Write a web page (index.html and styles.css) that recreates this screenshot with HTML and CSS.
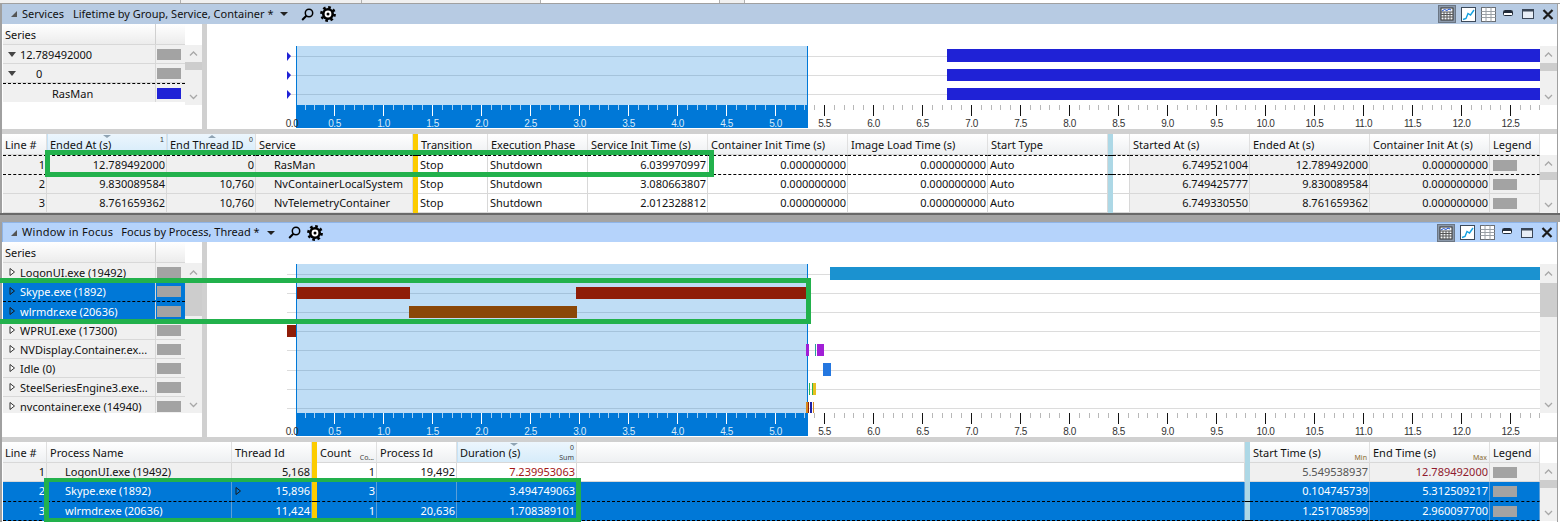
FILE: index.html
```html
<!DOCTYPE html>
<html lang="en">
<head>
<meta charset="utf-8">
<title>Windows Performance Analyzer</title>
<link rel="stylesheet" href="styles.css">
</head>
<body>
<svg class="defs" aria-hidden="true">
  <symbol id="tri-open" viewBox="0 0 10 10"><path d="M1 3h8L5 8z" fill="#444"/></symbol>
  <symbol id="tri-closed" viewBox="0 0 10 10"><path d="M3 1.5v7L7.5 5z" fill="#fff" stroke="#333"/></symbol>
  <symbol id="tri-closed-sel" viewBox="0 0 10 10"><path d="M3 1.5v7L7.5 5z" fill="#0078d7" stroke="#1a1a1a"/></symbol>
  <symbol id="collapse" viewBox="0 0 8 8"><path d="M1 7h6V1z" fill="#555"/></symbol>
  <symbol id="drop" viewBox="0 0 8 6"><path d="M0 1h8L4 5z" fill="#222"/></symbol>
  <symbol id="search" viewBox="0 0 13 13"><circle cx="8" cy="5" r="3.7" fill="none" stroke="#000" stroke-width="1.5"/><path d="M5.4 7.7 1.2 12" stroke="#000" stroke-width="2"/></symbol>
  <symbol id="gear" viewBox="0 0 16 16"><circle cx="8" cy="8" r="6" fill="#000"/><circle cx="8" cy="8" r="6.6" fill="none" stroke="#000" stroke-width="2.6" stroke-dasharray="2.6 2.58"/><circle cx="8" cy="8" r="3.4" fill="#fff"/><circle cx="8" cy="8" r="1.5" fill="#000"/></symbol>
  <symbol id="ic-both" viewBox="0 0 18 18"><rect x=".5" y=".5" width="17" height="17" fill="#8b99ab" stroke="#6b7684"/><rect x="3" y="3" width="12" height="12" fill="#f4f6f8" stroke="#333"/><path d="M3 7h12M3 9.5h12M3 12h12M6 7v8M9 7v8M12 7v8" stroke="#555"/><path d="M4 6l2.500-1.500 2.500 1 2-1.500 2 1" fill="none" stroke="#1a4fd0"/></symbol>
  <symbol id="ic-graph" viewBox="0 0 15 15"><rect x=".5" y=".5" width="14" height="14" fill="#fff" stroke="#3d4a5a"/><path d="M2 12.500l3-1 2-5 2.500 1.500L13 3" fill="none" stroke="#12a0e0" stroke-width="1.400"/></symbol>
  <symbol id="ic-table" viewBox="0 0 15 15"><rect x=".5" y=".5" width="14" height="14" fill="#fff" stroke="#6a6f75"/><path d="M.5 4.500h14M.5 7.500h14M.5 10.500h14M5 .5v14M10 .5v14" stroke="#9aa0a6"/></symbol>
  <symbol id="ic-min" viewBox="0 0 10 6"><rect x=".5" y=".5" width="9" height="5" rx="1" fill="#fff" stroke="#222c3a"/><rect x="1" y="1" width="8" height="2" fill="#222c3a"/></symbol>
  <symbol id="ic-max" viewBox="0 0 12 10"><rect x=".5" y=".5" width="11" height="9" fill="#e8eef6" stroke="#3a4656"/><rect x="1" y="1" width="10" height="1.500" fill="#3a4656"/></symbol>
  <symbol id="ic-close" viewBox="0 0 12 11"><path d="M1.500 1l9 9M10.500 1l-9 9" stroke="#1c1c1c" stroke-width="2.200"/></symbol>
  <symbol id="chev-up" viewBox="0 0 17 17"><path d="M5 10.500l3.500-3.500 3.500 3.500" fill="none" stroke="#a8a8a8" stroke-width="1.300"/></symbol>
  <symbol id="chev-down" viewBox="0 0 17 17"><path d="M5 7l3.500 3.500L12 7" fill="none" stroke="#a8a8a8" stroke-width="1.300"/></symbol>
</svg>

<div class="tabs">
  <div class="tab tab-a"></div><div class="tab tab-a"></div><div class="tab tab-b"></div>
  <div class="tab tab-on"></div><div class="tab tab-c"></div><div class="tab tab-rest"></div>
</div>

<section class="panel panel-top">
  <header class="title">
    <svg class="t-collapse"><use href="#collapse"/></svg>
    <span class="t-name">Services</span>
    <span class="t-preset p1">Lifetime by Group, Service, Container *</span>
    <svg class="t-drop"><use href="#drop"/></svg>
    <svg class="t-search"><use href="#search"/></svg>
    <svg class="t-gear"><use href="#gear"/></svg>
    <div class="t-tools">
      <svg class="i-both"><use href="#ic-both"/></svg>
      <svg class="i-graph"><use href="#ic-graph"/></svg>
      <svg class="i-table"><use href="#ic-table"/></svg>
      <svg class="i-min"><use href="#ic-min"/></svg>
      <svg class="i-max"><use href="#ic-max"/></svg>
      <svg class="i-close"><use href="#ic-close"/></svg>
    </div>
  </header>
  <div class="main main-top">
    <div class="series">
      <div class="series-list">
        <div class="s-head"><span class="s-name">Series</span><span class="s-leg"></span></div>
        <div class="s-row"><span class="s-name"><svg class="tri"><use href="#tri-open"/></svg>12.789492000</span><span class="s-leg"><i class="sw"></i></span></div>
        <div class="s-row"><span class="s-name lvl1"><svg class="tri"><use href="#tri-open"/></svg>0</span><span class="s-leg"><i class="sw"></i></span></div>
        <div class="s-row focus"><span class="s-name lvl2">RasMan</span><span class="s-leg"><i class="sw sw-blue"></i></span></div>
      </div>
      <div class="vscroll vs-short">
        <svg class="chev"><use href="#chev-up"/></svg><div class="thumb"></div><div class="fill"></div><svg class="chev"><use href="#chev-down"/></svg>
      </div>
    </div>
    <div class="vsplit"></div>
    <svg class="chart chart-top" viewBox="207 24 1333 105">
      <defs>
        <pattern id="tk-sel" patternUnits="userSpaceOnUse" x="285" y="105" width="49" height="23">
          <rect width="1" height="11" fill="#fff"/><rect x="10" width="1" height="5" fill="#a9d0f0"/><rect x="20" width="1" height="5" fill="#a9d0f0"/><rect x="29" width="1" height="5" fill="#a9d0f0"/><rect x="39" width="1" height="5" fill="#a9d0f0"/>
        </pattern>
        <pattern id="tk-off" patternUnits="userSpaceOnUse" x="285" y="105" width="49" height="23">
          <rect width="1" height="11" fill="#111"/><rect x="10" width="1" height="5" fill="#b8b8b8"/><rect x="20" width="1" height="5" fill="#b8b8b8"/><rect x="29" width="1" height="5" fill="#b8b8b8"/><rect x="39" width="1" height="5" fill="#b8b8b8"/>
        </pattern>
      </defs>
      <g class="grid"><rect x="287" y="56" width="1253" height="1"/><rect x="287" y="75" width="1253" height="1"/><rect x="287" y="94" width="1253" height="1"/></g>
      <rect class="sel" x="296" y="46" width="512" height="59"/>
      <rect class="sel-edge" x="296" y="46" width="1" height="59"/><rect class="sel-edge" x="807" y="46" width="1" height="59"/>
      <g class="blue"><rect x="947" y="49" width="593" height="13"/><rect x="947" y="69" width="593" height="12"/><rect x="947" y="88" width="593" height="12"/>
        <path d="M287 52l4 4-4 5zM287 71l4 4-4 5zM287 90l4 4-4 5z"/></g>
      <g id="ticks">
        <rect class="axis-sel" x="296" y="105" width="512" height="23"/>
        <rect x="296" y="105" width="512" height="23" fill="url(#tk-sel)"/>
        <rect x="808" y="105" width="732" height="23" fill="url(#tk-off)"/>
      </g>
      <g class="lab lab-on" transform="translate(0 127)"><text class="lab-zero" x="292">0.0</text><text x="334.5">0.5</text><text x="383.5">1.0</text><text x="432.5">1.5</text><text x="481.5">2.0</text><text x="530.5">2.5</text><text x="579.5">3.0</text><text x="628.500">3.5</text><text x="677.5">4.0</text><text x="726.5">4.5</text><text x="775.5">5.0</text></g>
      <g class="lab" transform="translate(0 127)"><text x="824.5">5.5</text><text x="873.5">6.0</text><text x="922.5">6.5</text><text x="971.5">7.0</text><text x="1020.5">7.5</text><text x="1069.5">8.0</text><text x="1118.5">8.5</text><text x="1167.5">9.0</text><text x="1216.5">9.5</text><text x="1265.5">10.0</text><text x="1314.5">10.5</text><text x="1363.5">11.0</text><text x="1412.5">11.5</text><text x="1461.5">12.0</text><text x="1510.5">12.5</text></g>
    </svg>
    <div class="vscroll vs-chart-top">
      <svg class="chev"><use href="#chev-up"/></svg><div class="thumb"></div><div class="fill"></div><svg class="chev"><use href="#chev-down"/></svg>
    </div>
  </div>
  <div class="hsplit"></div>
  <div class="table t1">
    <div class="rows">
      <div class="row head">
        <span class="c">Line #</span>
        <span class="c sorted">Ended At (s)<i class="sort-down sd1"></i><b class="sort-no">1</b></span>
        <span class="c sorted">End Thread ID<i class="sort-up su1"></i><b class="sort-no">0</b></span>
        <span class="c">Service</span>
        <span class="gold"></span>
        <span class="c">Transition</span><span class="c">Execution Phase</span><span class="c">Service Init Time (s)</span><span class="c">Container Init Time (s)</span><span class="c">Image Load Time (s)</span><span class="c">Start Type</span>
        <span class="aqua"></span><span class="c"></span>
        <span class="c">Started At (s)</span><span class="c">Ended At (s)</span><span class="c">Container Init At (s)</span><span class="c">Legend</span>
      </div>
      <div class="row focus">
        <span class="c g r">1</span><span class="c g r">12.789492000</span><span class="c g r">0</span><span class="c g in">RasMan</span><span class="gold"></span>
        <span class="c">Stop</span><span class="c">Shutdown</span><span class="c r">6.039970997</span><span class="c r">0.000000000</span><span class="c r">0.000000000</span><span class="c">Auto</span><span class="aqua"></span><span class="c"></span>
        <span class="c g r">6.749521004</span><span class="c g r">12.789492000</span><span class="c g r">0.000000000</span><span class="c g"><i class="sw sw-t"></i></span>
      </div>
      <div class="row">
        <span class="c g r">2</span><span class="c g r">9.830089584</span><span class="c g r">10,760</span><span class="c g in">NvContainerLocalSystem</span><span class="gold"></span>
        <span class="c">Stop</span><span class="c">Shutdown</span><span class="c r">3.080663807</span><span class="c r">0.000000000</span><span class="c r">0.000000000</span><span class="c">Auto</span><span class="aqua"></span><span class="c"></span>
        <span class="c g r">6.749425777</span><span class="c g r">9.830089584</span><span class="c g r">0.000000000</span><span class="c g"><i class="sw sw-t"></i></span>
      </div>
      <div class="row">
        <span class="c g r">3</span><span class="c g r">8.761659362</span><span class="c g r">10,760</span><span class="c g in">NvTelemetryContainer</span><span class="gold"></span>
        <span class="c">Stop</span><span class="c">Shutdown</span><span class="c r">2.012328812</span><span class="c r">0.000000000</span><span class="c r">0.000000000</span><span class="c">Auto</span><span class="aqua"></span><span class="c"></span>
        <span class="c g r">6.749330550</span><span class="c g r">8.761659362</span><span class="c g r">0.000000000</span><span class="c g"><i class="sw sw-t"></i></span>
      </div>
    </div>
    <div class="vscroll vs-table">
      <svg class="chev"><use href="#chev-up"/></svg><div class="thumb"></div><div class="fill"></div><svg class="chev"><use href="#chev-down"/></svg>
    </div>
  </div>
</section>

<div class="panel-gap"></div>

<section class="panel panel-bottom">
  <header class="title">
    <svg class="t-collapse"><use href="#collapse"/></svg>
    <span class="t-name">Window in Focus</span>
    <span class="t-preset p2">Focus by Process, Thread *</span>
    <svg class="t-drop"><use href="#drop"/></svg>
    <svg class="t-search"><use href="#search"/></svg>
    <svg class="t-gear"><use href="#gear"/></svg>
    <div class="t-tools">
      <svg class="i-both"><use href="#ic-both"/></svg>
      <svg class="i-graph"><use href="#ic-graph"/></svg>
      <svg class="i-table"><use href="#ic-table"/></svg>
      <svg class="i-min"><use href="#ic-min"/></svg>
      <svg class="i-max"><use href="#ic-max"/></svg>
      <svg class="i-close"><use href="#ic-close"/></svg>
    </div>
  </header>
  <div class="main main-bottom">
    <div class="series">
      <div class="series-list">
        <div class="s-head"><span class="s-name">Series</span><span class="s-leg"></span></div>
        <div class="s-row"><span class="s-name"><svg class="tri"><use href="#tri-closed"/></svg>LogonUI.exe (19492)</span><span class="s-leg"><i class="sw"></i></span></div>
        <div class="s-row sel-row"><span class="s-name"><svg class="tri"><use href="#tri-closed-sel"/></svg>Skype.exe (1892)</span><span class="s-leg"><i class="sw"></i></span></div>
        <div class="s-row sel-row focus-top"><span class="s-name"><svg class="tri"><use href="#tri-closed-sel"/></svg>wlrmdr.exe (20636)</span><span class="s-leg"><i class="sw"></i></span></div>
        <div class="s-row"><span class="s-name"><svg class="tri"><use href="#tri-closed"/></svg>WPRUI.exe (17300)</span><span class="s-leg"><i class="sw"></i></span></div>
        <div class="s-row"><span class="s-name"><svg class="tri"><use href="#tri-closed"/></svg>NVDisplay.Container.ex...</span><span class="s-leg"><i class="sw"></i></span></div>
        <div class="s-row"><span class="s-name"><svg class="tri"><use href="#tri-closed"/></svg>Idle (0)</span><span class="s-leg"><i class="sw"></i></span></div>
        <div class="s-row"><span class="s-name"><svg class="tri"><use href="#tri-closed"/></svg>SteelSeriesEngine3.exe...</span><span class="s-leg"><i class="sw"></i></span></div>
        <div class="s-row"><span class="s-name"><svg class="tri"><use href="#tri-closed"/></svg>nvcontainer.exe (14940)</span><span class="s-leg"><i class="sw"></i></span></div>
      </div>
      <div class="vscroll vs-tall">
        <svg class="chev"><use href="#chev-up"/></svg><div class="thumb"></div><div class="fill"></div><svg class="chev"><use href="#chev-down"/></svg>
      </div>
    </div>
    <div class="vsplit"></div>
    <svg class="chart chart-bottom" viewBox="207 242 1333 195">
      <g class="grid"><rect x="287" y="274" width="1253" height="1"/><rect x="287" y="293" width="1253" height="1"/><rect x="287" y="312" width="1253" height="1"/><rect x="287" y="331" width="1253" height="1"/><rect x="287" y="350" width="1253" height="1"/><rect x="287" y="370" width="1253" height="1"/><rect x="287" y="389" width="1253" height="1"/><rect x="287" y="408" width="1253" height="1"/></g>
      <rect class="sel" x="296" y="264" width="512" height="149"/>
      <rect class="sel-edge" x="296" y="264" width="1" height="149"/><rect class="sel-edge" x="807" y="264" width="1" height="149"/>
      <rect class="b-logon" x="830" y="267" width="710" height="13"/>
      <g class="b-red"><rect x="297" y="287" width="113" height="12"/><rect x="576" y="287" width="230" height="12"/><rect x="287" y="325" width="9" height="12"/></g>
      <rect class="b-brown" x="409" y="306" width="168" height="12"/>
      <g class="b-purple"><rect x="806" y="344" width="3" height="12"/><rect x="817" y="344" width="7" height="12"/></g>
      <rect class="b-teal" x="815" y="344" width="1" height="12"/>
      <rect class="b-azure" x="823" y="363" width="8" height="13"/>
      <g class="b-green"><rect x="809" y="383" width="1" height="12"/><rect x="812" y="383" width="1" height="12"/></g>
      <rect class="b-yellow" x="813" y="383" width="3" height="12"/>
      <g class="b-orange"><rect x="806" y="402" width="2" height="11"/><rect x="813" y="402" width="1" height="11"/></g>
      <rect class="b-red" x="808" y="402" width="1" height="11"/>
      <rect class="b-navy" x="810" y="402" width="2" height="11"/>
      <use href="#ticks" y="308"/>
      <g class="lab lab-on" transform="translate(0 435)"><text class="lab-zero" x="292">0.0</text><text x="334.5">0.5</text><text x="383.5">1.0</text><text x="432.5">1.5</text><text x="481.5">2.0</text><text x="530.5">2.5</text><text x="579.5">3.0</text><text x="628.500">3.5</text><text x="677.5">4.0</text><text x="726.5">4.5</text><text x="775.5">5.0</text></g>
      <g class="lab" transform="translate(0 435)"><text x="824.5">5.5</text><text x="873.5">6.0</text><text x="922.5">6.5</text><text x="971.5">7.0</text><text x="1020.5">7.5</text><text x="1069.5">8.0</text><text x="1118.5">8.5</text><text x="1167.5">9.0</text><text x="1216.5">9.5</text><text x="1265.5">10.0</text><text x="1314.5">10.5</text><text x="1363.5">11.0</text><text x="1412.5">11.5</text><text x="1461.5">12.0</text><text x="1510.5">12.5</text></g>
    </svg>
    <div class="vscroll vs-chart-bottom">
      <svg class="chev"><use href="#chev-up"/></svg><div class="thumb"></div><div class="fill"></div><svg class="chev"><use href="#chev-down"/></svg>
    </div>
  </div>
  <div class="hsplit"></div>
  <div class="table t2">
    <div class="rows">
      <div class="row head">
        <span class="c">Line #</span><span class="c">Process Name</span><span class="c">Thread Id</span><span class="gold"></span>
        <span class="c">Count<small class="agg">Co...</small></span><span class="c">Process Id</span>
        <span class="c sorted">Duration (s)<i class="sort-down sd2"></i><b class="sort-no">0</b><small class="agg">Sum</small></span>
        <span class="c"></span><span class="aqua"></span>
        <span class="c">Start Time (s)<small class="agg amber">Min</small></span><span class="c">End Time (s)<small class="agg amber">Max</small></span><span class="c">Legend</span>
      </div>
      <div class="row">
        <span class="c g r">1</span><span class="c g in">LogonUI.exe (19492)</span><span class="c g r">5,168</span><span class="gold"></span>
        <span class="c r">1</span><span class="c r">19,492</span><span class="c r red">7.239953063</span><span class="c"></span><span class="aqua"></span>
        <span class="c g r dim">5.549538937</span><span class="c g r maroon">12.789492000</span><span class="c g"><i class="sw sw-t"></i></span>
      </div>
      <div class="row sel-row">
        <span class="c r">2</span><span class="c in">Skype.exe (1892)</span><span class="c r thread"><svg class="tri tri-abs"><use href="#tri-closed-sel"/></svg>15,896</span><span class="gold"></span>
        <span class="c r">3</span><span class="c r"></span><span class="c r">3.494749063</span><span class="c"></span><span class="aqua"></span>
        <span class="c r">0.104745739</span><span class="c r">5.312509217</span><span class="c"><i class="sw sw-t"></i></span>
      </div>
      <div class="row sel-row focus">
        <span class="c r">3</span><span class="c in">wlrmdr.exe (20636)</span><span class="c r">11,424</span><span class="gold"></span>
        <span class="c r">1</span><span class="c r">20,636</span><span class="c r">1.708389101</span><span class="c"></span><span class="aqua"></span>
        <span class="c r">1.251708599</span><span class="c r">2.960097700</span><span class="c"><i class="sw sw-t"></i></span>
      </div>
    </div>
    <div class="vscroll vs-table">
      <svg class="chev"><use href="#chev-up"/></svg><div class="thumb"></div><div class="fill"></div><svg class="chev"><use href="#chev-down"/></svg>
    </div>
  </div>
</section>

<div class="mark mark-a"></div>
<div class="mark mark-b"></div>
<div class="mark mark-c"></div>
</body>
</html>
```

FILE: styles.css
```css
* { box-sizing: border-box; }
html, body { margin: 0; padding: 0; }
body {
  width: 1560px; height: 522px; overflow: hidden; position: relative;
  background: #fff; color: #111;
  font: 11px/1 "Noto Sans", "Liberation Sans", sans-serif;
}
.defs { position: absolute; width: 0; height: 0; }
svg { display: block; flex: none; }

/* top tab strip */
.tabs { display: flex; height: 4px; border-bottom: 1px solid #a0a0a0; background: #f0f0f0; }
.tab { height: 3px; border-right: 1px solid #b0b0b0; }
.tab-a { width: 181px; }
.tab-b { width: 179px; }
.tab-on { width: 179px; background: #fff; }
.tab-c { width: 25px; }
.tab-rest { flex: 1; background: #fff; border: 0; }

/* panels */
.panel { width: 1558px; border-left: 2px solid #a0a0a0; border-right: 1px solid #a0a0a0; background: #fff; }
.panel-gap { height: 9px; background: #a4a4a4; border-top: 2px solid #696969; }
.title { height: 20px; display: flex; align-items: center; font-size: 11px; color: #111; }
.panel-top .title { background: #b7cbe3; }
.panel-bottom .title { background: #b5d3fb; border: 1px solid #8fb4e6; border-bottom: 0; }
.t-collapse { width: 8px; height: 8px; margin-left: 8px; }
.panel-bottom .t-collapse { margin-left: 7px; }
.t-name { margin-left: 4px; padding-bottom: 2px; }
.panel-bottom .t-name { letter-spacing: .3px; }
.t-preset { margin-left: 9px; padding-bottom: 2px; }
.t-preset.p2 { margin-left: 8px; }
.t-drop { width: 8px; height: 6px; margin-left: 7px; }
.t-search { width: 13px; height: 13px; margin-left: 13px; }
.t-gear { width: 16px; height: 16px; margin-left: 6px; }
.t-tools { margin-left: auto; display: flex; align-items: center; margin-right: 3px; }
.i-both { width: 18px; height: 18px; }
.i-graph { width: 15px; height: 15px; margin-left: 5px; }
.i-table { width: 15px; height: 15px; margin-left: 5px; }
.i-min { width: 10px; height: 6px; margin-left: 7px; margin-bottom: 3px; }
.i-max { width: 12px; height: 10px; margin-left: 9px; }
.i-close { width: 12px; height: 11px; margin-left: 8px; }

/* graph area */
.main { display: flex; padding-left: 1px; }
.main-top { height: 105px; }
.main-bottom { height: 195px; }
.series { width: 199px; display: flex; align-items: flex-start; }
.series-list { width: 182px; overflow: hidden; }
.main-top .series-list { height: 78px; }
.main-bottom .series-list { height: 171px; }
.s-head { display: flex; height: 21px; background: linear-gradient(#fff, #ececec); border-bottom: 1px solid #d8d8d8; }
.s-row { display: flex; height: 19px; background: #f0f0f0; border-bottom: 1px solid #d8d8d8; }
.s-name { width: 152px; padding-left: 2px; display: flex; align-items: center; white-space: nowrap; overflow: hidden; }
.s-leg { width: 30px; border-left: 1px solid #d8d8d8; display: flex; align-items: center; padding-left: 1px; }
.s-head .s-leg { border-left: 1px solid #d0d0d0; }
.s-row.focus { height: 20px; border-top: 1px dashed #000; border-bottom: 1px dashed #000; }
.s-row.focus-top { height: 20px; border-top: 1px dashed #000; }
.s-row.sel-row { background: #0078d7; color: #fff; border-bottom-color: #0078d7; }
.lvl1 .tri { margin-right: 19px; }
.lvl2 { padding-left: 49px; }
.tri { width: 10px; height: 10px; margin: 0 3px 0 2px; }
.sw { display: block; width: 24px; height: 11px; background: #a3a3a3; }
.sw-blue { background: #1f22d6; }
.sw-t { margin: 4px 0 0 1px; }

.vscroll { width: 17px; background: #f0f0f0; display: flex; flex-direction: column; }
.chev { width: 17px; height: 17px; }
.thumb { height: 8px; background: #cdcdcd; }
.fill { flex: 1; }
.vs-short { height: 60px; margin-top: 21px; }
.vs-tall { height: 150px; margin-top: 21px; }
.vs-tall .chev:first-child { height: 19px; }
.vs-tall .thumb { height: 34px; }
.vs-chart-top { height: 59px; margin-top: 22px; }
.vs-chart-bottom { height: 149px; margin-top: 22px; }
.vs-chart-bottom .chev:first-child { height: 19px; }
.vs-chart-bottom .thumb { height: 34px; }
.vs-table { height: 58px; margin-top: 21px; }
.vsplit { width: 5px; background: #d0d0d0; }
.hsplit { height: 5px; background: #d0d0d0; }
.chart { width: 1333px; }
.chart-top { height: 105px; }
.chart-bottom { height: 195px; }
.grid rect { fill: #dcdcdc; }
.sel { fill: #0078d7; fill-opacity: .25; }
.sel-edge, .axis-sel { fill: #0078d7; }
.blue { fill: #1f22d6; }
.b-logon { fill: #1b92d0; }
.b-red { fill: #8f1d08; }
.b-brown { fill: #8a4708; }
.b-purple { fill: #a11fd6; }
.b-teal { fill: #2aa198; }
.b-azure { fill: #2477e0; }
.b-green { fill: #2fb457; }
.b-yellow { fill: #e8c020; }
.b-orange { fill: #d68a20; }
.b-navy { fill: #1f22a6; }
.lab text { font: 10px "Liberation Sans", sans-serif; letter-spacing: -.4px; text-anchor: middle; fill: #333; }
.lab-on text { fill: #d9eaf8; }
.lab-on .lab-zero { fill: #333; }

/* tables */
.table { display: flex; height: 79px; overflow: hidden; }
.t2 { height: 80px; }
.rows { width: 1539px; padding-left: 1px; }
.row { display: grid; height: 19px; }
.t1 .row { grid-template-columns: 44px 120px 89px 157px 5px 70px 100px 120px 140px 140px 120px 5px 17px 120px 120px 120px 50px; }
.t2 .row { grid-template-columns: 44px 185px 80px 5px 60px 80px 120px 668px 5px 120px 120px 50px; }
.c {
  position: relative; display: block; padding: 0 1px 0 2px; line-height: 18px;
  border-right: 1px solid #d8d8d8; border-bottom: 1px solid #d8d8d8;
  white-space: nowrap; overflow: hidden; background: #fff;
}
.head { height: 21px; }
.head .c { background: linear-gradient(#fff, #eef0f2); line-height: 22px; padding-left: 3px; border-right-color: #e0e0e0; }
.head .c:first-child { padding-left: 2px; }
.head .sorted { background: linear-gradient(#ecf6fd, #d6ecfa); border-left: 1px solid #c6e2f6; padding-left: 2px; }
.g { background: #f0f0f0; }
.r { text-align: right; }
.c.in { padding-left: 18px; }
.gold { background: #fccc00; }
.aqua { background: #add8e6; }
.row.focus { height: 20px; }
.row.focus .c { border-top: 1px dashed #000; border-bottom: 1px dashed #000; line-height: 18px; }
.row.focus .gold, .row.focus .aqua { border-top: 1px dashed #000; border-bottom: 1px dashed #000; }
.row.sel-row .c { background: #0078d7; color: #fff; border-right-color: #5c9fd8; border-bottom-color: #0078d7; }
.row.sel-row.focus .c { border-bottom-color: #000; border-top-color: #000; }
.red { color: #a31515; }
.maroon { color: #8f1a2e; }
.dim { color: #555; }
.sort-down, .sort-up { position: absolute; top: 1px; width: 0; height: 0; border-left: 4px solid transparent; border-right: 4px solid transparent; }
.sort-down { border-top: 3px solid #8fa3b3; }
.sort-up { border-bottom: 3px solid #8fa3b3; }
.sd1 { left: 55px; }
.su1 { left: 40px; }
.sd2 { left: 52px; }
.sort-no { position: absolute; top: 1px; right: 2px; font: 7px/9px "Liberation Sans", sans-serif; color: #333; }
.agg { position: absolute; right: 2px; bottom: 0; font: 7px/9px "Noto Sans", sans-serif; color: #444; }
.amber { color: #8a6a30; }
.thread { position: relative; }
.tri-abs { position: absolute; left: 1px; top: 4px; margin: 0; }

/* green annotations drawn over the screenshot */
.mark { position: absolute; border: 5px solid #22b14c; pointer-events: none; }
.mark-a { left: 45px; top: 150px; width: 669px; height: 27px; }
.mark-b { left: -6px; top: 278px; width: 817px; height: 46px; }
.mark-c { left: 44px; top: 478px; width: 537px; height: 44px; border-width: 4px 5px; }
```
